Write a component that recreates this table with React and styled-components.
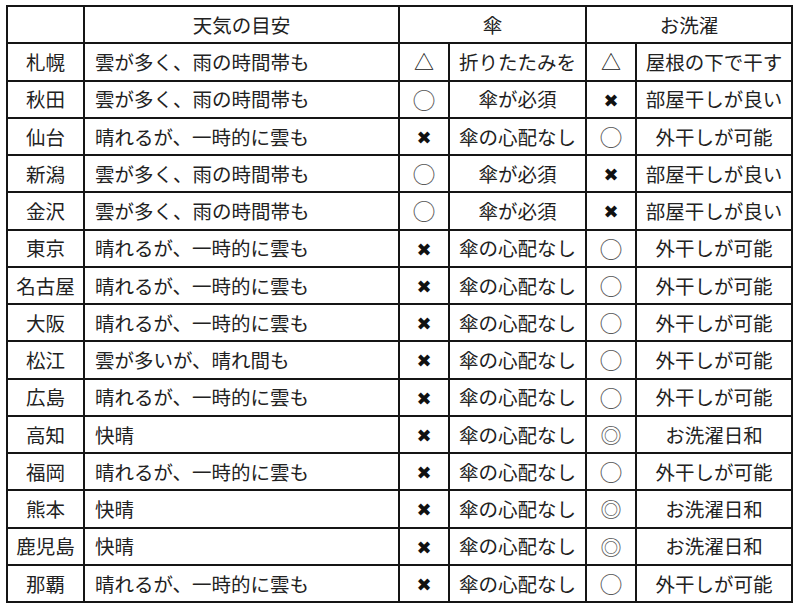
import React from 'react';
import styled, { createGlobalStyle } from 'styled-components';

const GlobalStyle = createGlobalStyle`
  body {
    margin: 0;
    background: #fff;
    font-family: "Noto Sans CJK JP", "Noto Sans", sans-serif;
    color: #222;
  }
`;

const Page = styled.div`
  padding: 5px 0 0 6px;
`;

const Table = styled.table`
  border-collapse: collapse;
  width: 787px;
  table-layout: fixed;
  font-size: 19.5px;
`;

const Row = styled.tr`
  height: 37.25px;
`;

const Cell = styled.td`
  border: 2px solid #151515;
  padding: 0;
  text-align: ${(props) => (props.$left ? 'left' : 'center')};
  padding-left: ${(props) => (props.$left ? '10px' : '0')};
  vertical-align: middle;
  white-space: nowrap;
  line-height: 1;
`;

const HeadCell = styled(Cell).attrs({ as: 'th' })`
  font-weight: normal;
`;

const Mark = styled.span`
  display: inline-block;
  font-size: ${(props) => props.$size || '20px'};
  font-family: ${(props) =>
    props.$dv ? '"DejaVu Sans", sans-serif' : '"Noto Sans CJK JP", sans-serif'};
  color: ${(props) => (props.$light ? '#555' : '#111')};
  line-height: 1;
`;

const marks = {
  '△': { size: '20px' },
  '○': { size: '23px', light: true },
  '◎': { size: '21px', light: true },
  '✖': { size: '18px', dv: true },
};

function Symbol({ value }) {
  const m = marks[value];
  return (
    <Mark $size={m.size} $dv={m.dv} $light={m.light}>
      {value}
    </Mark>
  );
}

const rows = [
  ['札幌', '雲が多く、雨の時間帯も', '△', '折りたたみを', '△', '屋根の下で干す'],
  ['秋田', '雲が多く、雨の時間帯も', '○', '傘が必須', '✖', '部屋干しが良い'],
  ['仙台', '晴れるが、一時的に雲も', '✖', '傘の心配なし', '○', '外干しが可能'],
  ['新潟', '雲が多く、雨の時間帯も', '○', '傘が必須', '✖', '部屋干しが良い'],
  ['金沢', '雲が多く、雨の時間帯も', '○', '傘が必須', '✖', '部屋干しが良い'],
  ['東京', '晴れるが、一時的に雲も', '✖', '傘の心配なし', '○', '外干しが可能'],
  ['名古屋', '晴れるが、一時的に雲も', '✖', '傘の心配なし', '○', '外干しが可能'],
  ['大阪', '晴れるが、一時的に雲も', '✖', '傘の心配なし', '○', '外干しが可能'],
  ['松江', '雲が多いが、晴れ間も', '✖', '傘の心配なし', '○', '外干しが可能'],
  ['広島', '晴れるが、一時的に雲も', '✖', '傘の心配なし', '○', '外干しが可能'],
  ['高知', '快晴', '✖', '傘の心配なし', '◎', 'お洗濯日和'],
  ['福岡', '晴れるが、一時的に雲も', '✖', '傘の心配なし', '○', '外干しが可能'],
  ['熊本', '快晴', '✖', '傘の心配なし', '◎', 'お洗濯日和'],
  ['鹿児島', '快晴', '✖', '傘の心配なし', '◎', 'お洗濯日和'],
  ['那覇', '晴れるが、一時的に雲も', '✖', '傘の心配なし', '○', '外干しが可能'],
];

export default function App() {
  return (
    <Page>
      <GlobalStyle />
      <Table>
        <colgroup>
          <col style={{ width: 77 }} />
          <col style={{ width: 315 }} />
          <col style={{ width: 50 }} />
          <col style={{ width: 137 }} />
          <col style={{ width: 50 }} />
          <col style={{ width: 156 }} />
        </colgroup>
        <thead>
          <Row>
            <HeadCell />
            <HeadCell>天気の目安</HeadCell>
            <HeadCell colSpan={2}>傘</HeadCell>
            <HeadCell colSpan={2}>お洗濯</HeadCell>
          </Row>
        </thead>
        <tbody>
          {rows.map(([city, weather, um, umText, wash, washText]) => (
            <Row key={city}>
              <Cell>{city}</Cell>
              <Cell $left>{weather}</Cell>
              <Cell>
                <Symbol value={um} />
              </Cell>
              <Cell>{umText}</Cell>
              <Cell>
                <Symbol value={wash} />
              </Cell>
              <Cell>{washText}</Cell>
            </Row>
          ))}
        </tbody>
      </Table>
    </Page>
  );
}
